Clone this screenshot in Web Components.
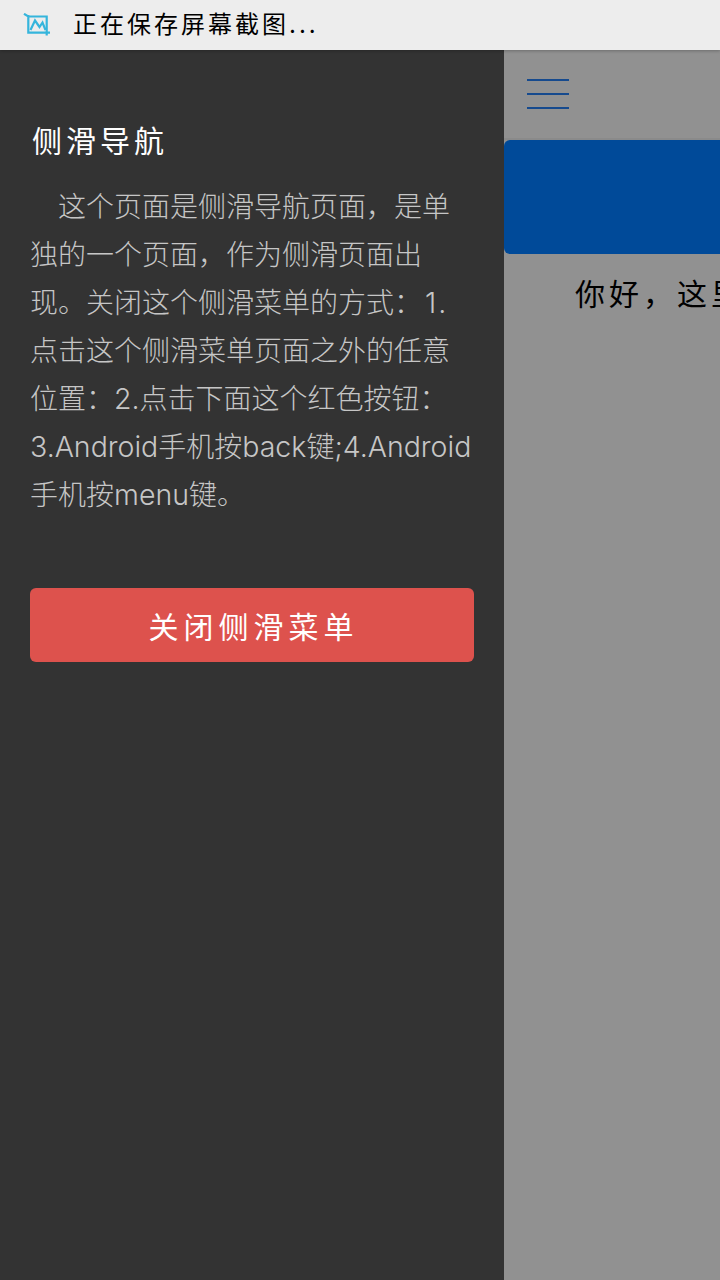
<!DOCTYPE html>
<html lang="zh-CN"><head><meta charset="utf-8">
<style>
html,body{margin:0;padding:0;width:720px;height:1280px;overflow:hidden;background:#919191}
body{font-family:"Inter","Noto Sans CJK SC",sans-serif;display:flex;flex-direction:column}
</style></head><body>
<status-bar>正在保存屏幕截图...</status-bar>
<app-frame>
  <side-drawer slot="drawer" heading="侧滑导航" action="关闭侧滑菜单">这个页面是侧滑导航页面，是单独的一个页面，作为侧滑页面出现。关闭这个侧滑菜单的方式：<span style="margin-left:3px;letter-spacing:2px">1.</span><br>点击这个侧滑菜单页面之外的任意<br>位置：<span>2.</span>点击下面这个红色按钮：<br><span>3.Android</span>手机按<span>back</span>键<span>;4.Android</span><br>手机按<span>menu</span>键。</side-drawer>
  <main-page slot="page">你好，这里</main-page>
</app-frame>
<script>
function def(name,html){customElements.define(name,class extends HTMLElement{constructor(){super();this.attachShadow({mode:'open'}).innerHTML=typeof html==='function'?html(this):html}})}
def('status-bar',`<style>:host{display:flex;align-items:center;height:50px;flex:none;background:#ededed;color:#000;font-size:24px;position:relative;z-index:2;box-shadow:0 1px 3px rgba(0,0,0,.25)}
svg{margin-left:23px;width:28px;height:24px;flex:none}
span{margin:-5px 0 0 22px;letter-spacing:3px;white-space:nowrap}</style>
<svg viewBox="0 0 28 24" fill="none" stroke="#35b5dc" stroke-width="2.2"><path d="M1 .8 5.3 3.5H23.7V22.5M27 19.7H5.3V2"/><path d="M7.5 17 12 7.5 16.5 14 19.5 9.5 22.5 17"/></svg><span><slot></slot></span>`);
def('app-frame',`<style>:host{display:flex;flex:1;min-height:0;overflow:hidden}</style><slot name="drawer"></slot><slot name="page"></slot>`);
def('side-drawer',el=>`<style>:host{display:block;flex:none;box-sizing:border-box;width:504px;background:#333;padding:71px 30px 0}
h2{margin:0 0 0 2px;font-size:30px;line-height:40px;font-weight:400;color:#fff;letter-spacing:4px}
p{margin:22px 0 0;font-size:28px;line-height:48px;color:#c6c6c6;font-weight:300;text-indent:28px;white-space:nowrap}
::slotted(span){font-size:28.5px;line-height:1;font-weight:300}
.w{display:block;white-space:normal}
button{display:block;width:100%;height:74px;margin-top:69px;border:0;border-radius:6px;background:#dd524d;color:#fff;font:inherit;font-size:30px;letter-spacing:5px;padding:0 0 0 3px}</style>
<h2>${el.getAttribute('heading')}</h2><p><span class="w"><slot></slot></span></p><button type="button">${el.getAttribute('action')}</button>`);
def('main-page',`<style>:host{display:block;flex:none;width:216px;overflow:hidden;background:#919191}
header{display:flex;flex-direction:column;justify-content:center;gap:12px;padding-left:23px;box-sizing:border-box;border-bottom:2px solid #8a8a8a;height:90px}
header i{display:block;width:42px;height:2px;background:#164a8e}
.card{height:114px;background:#004a99;border-radius:6px 0 0 6px}
p{margin:22px 0 0 71px;width:600px;font-size:30px;line-height:36px;color:#000;letter-spacing:4px;white-space:nowrap}</style>
<header><i></i><i></i><i></i></header><div class="card"></div><p><slot></slot></p>`);
</script>
</body></html>
